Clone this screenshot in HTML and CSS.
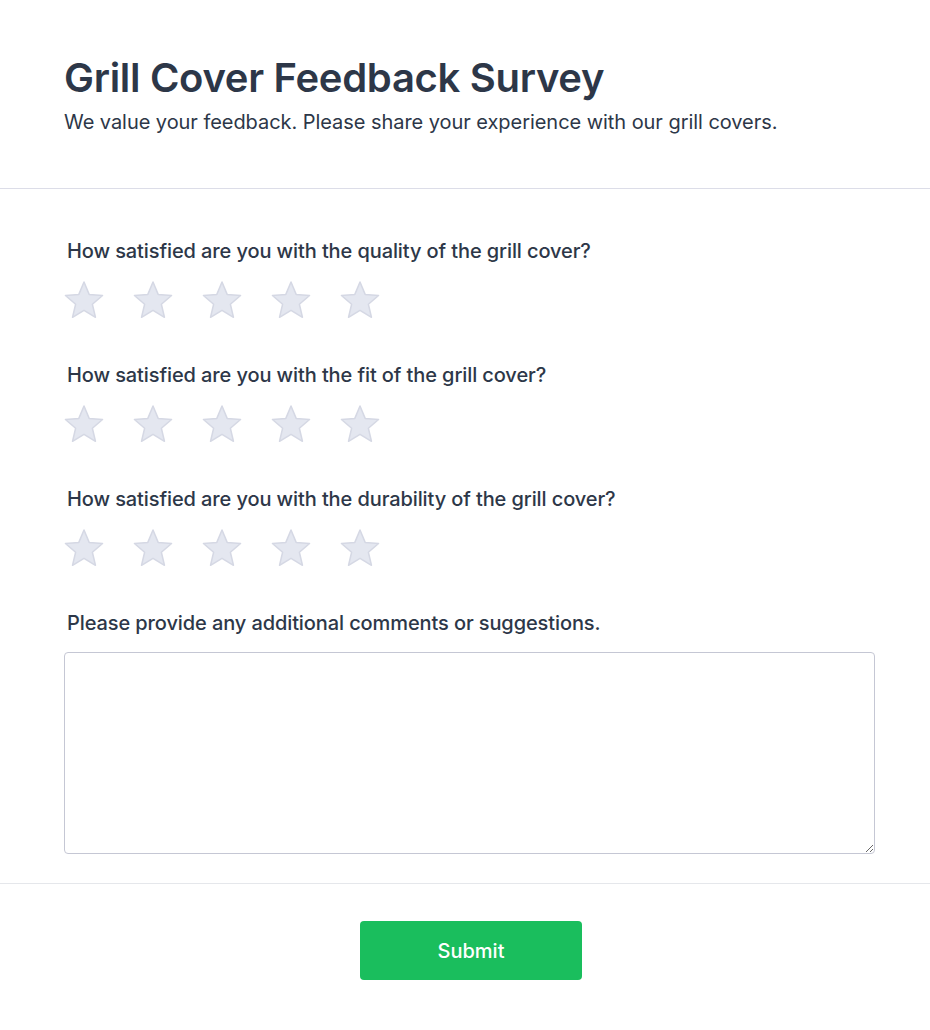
FILE: index.html
```html
<!DOCTYPE html>
<html lang="en">
<head>
<meta charset="utf-8">
<title>Grill Cover Feedback Survey</title>
<link rel="stylesheet" href="styles.css">
</head>
<body>
<div class="page">
  <header class="header">
    <h1 class="title">Grill Cover Feedback Survey</h1>
    <p class="subtitle">We value your feedback. Please share your experience with our grill covers.</p>
  </header>
  <form class="form">
    <div class="question">
      <label class="label">How satisfied are you with the quality of the grill cover?</label>
      <div class="stars">
        <svg class="star" viewBox="0 0 40 38"><path d="M20 1L25.17 13.38 38.55 14.47 28.37 23.22 31.46 36.28 20 29.3 8.54 36.28 11.63 23.22 1.45 14.47 14.83 13.38Z"/></svg>
        <svg class="star" viewBox="0 0 40 38"><path d="M20 1L25.17 13.38 38.55 14.47 28.37 23.22 31.46 36.28 20 29.3 8.54 36.28 11.63 23.22 1.45 14.47 14.83 13.38Z"/></svg>
        <svg class="star" viewBox="0 0 40 38"><path d="M20 1L25.17 13.38 38.55 14.47 28.37 23.22 31.46 36.28 20 29.3 8.54 36.28 11.63 23.22 1.45 14.47 14.83 13.38Z"/></svg>
        <svg class="star" viewBox="0 0 40 38"><path d="M20 1L25.17 13.38 38.55 14.47 28.37 23.22 31.46 36.28 20 29.3 8.54 36.28 11.63 23.22 1.45 14.47 14.83 13.38Z"/></svg>
        <svg class="star" viewBox="0 0 40 38"><path d="M20 1L25.17 13.38 38.55 14.47 28.37 23.22 31.46 36.28 20 29.3 8.54 36.28 11.63 23.22 1.45 14.47 14.83 13.38Z"/></svg>
      </div>
    </div>
    <div class="question">
      <label class="label">How satisfied are you with the fit of the grill cover?</label>
      <div class="stars">
        <svg class="star" viewBox="0 0 40 38"><path d="M20 1L25.17 13.38 38.55 14.47 28.37 23.22 31.46 36.28 20 29.3 8.54 36.28 11.63 23.22 1.45 14.47 14.83 13.38Z"/></svg>
        <svg class="star" viewBox="0 0 40 38"><path d="M20 1L25.17 13.38 38.55 14.47 28.37 23.22 31.46 36.28 20 29.3 8.54 36.28 11.63 23.22 1.45 14.47 14.83 13.38Z"/></svg>
        <svg class="star" viewBox="0 0 40 38"><path d="M20 1L25.17 13.38 38.55 14.47 28.37 23.22 31.46 36.28 20 29.3 8.54 36.28 11.63 23.22 1.45 14.47 14.83 13.38Z"/></svg>
        <svg class="star" viewBox="0 0 40 38"><path d="M20 1L25.17 13.38 38.55 14.47 28.37 23.22 31.46 36.28 20 29.3 8.54 36.28 11.63 23.22 1.45 14.47 14.83 13.38Z"/></svg>
        <svg class="star" viewBox="0 0 40 38"><path d="M20 1L25.17 13.38 38.55 14.47 28.37 23.22 31.46 36.28 20 29.3 8.54 36.28 11.63 23.22 1.45 14.47 14.83 13.38Z"/></svg>
      </div>
    </div>
    <div class="question">
      <label class="label">How satisfied are you with the durability of the grill cover?</label>
      <div class="stars">
        <svg class="star" viewBox="0 0 40 38"><path d="M20 1L25.17 13.38 38.55 14.47 28.37 23.22 31.46 36.28 20 29.3 8.54 36.28 11.63 23.22 1.45 14.47 14.83 13.38Z"/></svg>
        <svg class="star" viewBox="0 0 40 38"><path d="M20 1L25.17 13.38 38.55 14.47 28.37 23.22 31.46 36.28 20 29.3 8.54 36.28 11.63 23.22 1.45 14.47 14.83 13.38Z"/></svg>
        <svg class="star" viewBox="0 0 40 38"><path d="M20 1L25.17 13.38 38.55 14.47 28.37 23.22 31.46 36.28 20 29.3 8.54 36.28 11.63 23.22 1.45 14.47 14.83 13.38Z"/></svg>
        <svg class="star" viewBox="0 0 40 38"><path d="M20 1L25.17 13.38 38.55 14.47 28.37 23.22 31.46 36.28 20 29.3 8.54 36.28 11.63 23.22 1.45 14.47 14.83 13.38Z"/></svg>
        <svg class="star" viewBox="0 0 40 38"><path d="M20 1L25.17 13.38 38.55 14.47 28.37 23.22 31.46 36.28 20 29.3 8.54 36.28 11.63 23.22 1.45 14.47 14.83 13.38Z"/></svg>
      </div>
    </div>
    <div class="question comments">
      <label class="label">Please provide any additional comments or suggestions.</label>
      <textarea class="textarea"></textarea>
    </div>
  </form>
  <footer class="footer">
    <button class="submit" type="button">Submit</button>
  </footer>
</div>
</body>
</html>
```

FILE: styles.css
```css
* { box-sizing: border-box; }
body {
  margin: 0;
  background: #ffffff;
  font-family: Inter, "Noto Sans", sans-serif;
  color: #2d3748;
}
.page {
  width: 930px;
}
.header {
  padding: 54px 64px 52px 64px;
  border-bottom: 1px solid #dcdde8;
}
.title {
  margin: 0;
  font-size: 40px;
  font-weight: 600;
  line-height: 48px;
  color: #2d3748;
  letter-spacing: -0.3px;
}
.subtitle {
  margin: 6px 0 0 0;
  font-size: 20px;
  line-height: 28px;
  font-weight: 400;
  color: #2d3748;
  letter-spacing: -0.05px;
}
.form {
  padding: 48px 55px 29px 64px;
  border-bottom: 1px solid #e5e7eb;
}
.question {
  display: flex;
  flex-direction: column;
  margin-bottom: 42px;
}
.question.comments { margin-bottom: 0; }
.label {
  padding-left: 3px;
  font-size: 20px;
  line-height: 28px;
  font-weight: 500;
  color: #2d3748;
  letter-spacing: -0.1px;
}
.stars {
  display: flex;
  gap: 29px;
  margin-top: 16px;
}
.star {
  width: 40px;
  height: 38px;
  display: block;
}
.star path {
  fill: #e4e7f0;
  stroke: #d5d8e4;
  stroke-width: 1.5;
  stroke-linejoin: round;
}
.textarea {
  display: block;
  margin-top: 15px;
  width: 811px;
  height: 202px;
  border: 1px solid #c5c7d4;
  border-radius: 4px;
  font-family: inherit;
  font-size: 16px;
  resize: vertical;
}
.footer {
  display: flex;
  justify-content: center;
  padding: 37px 0 50px 12px;
}
.submit {
  width: 222px;
  height: 59px;
  border: none;
  border-radius: 4px;
  background: #1abe5d;
  color: #ffffff;
  font-family: inherit;
  font-size: 20px;
  font-weight: 500;
}
```
